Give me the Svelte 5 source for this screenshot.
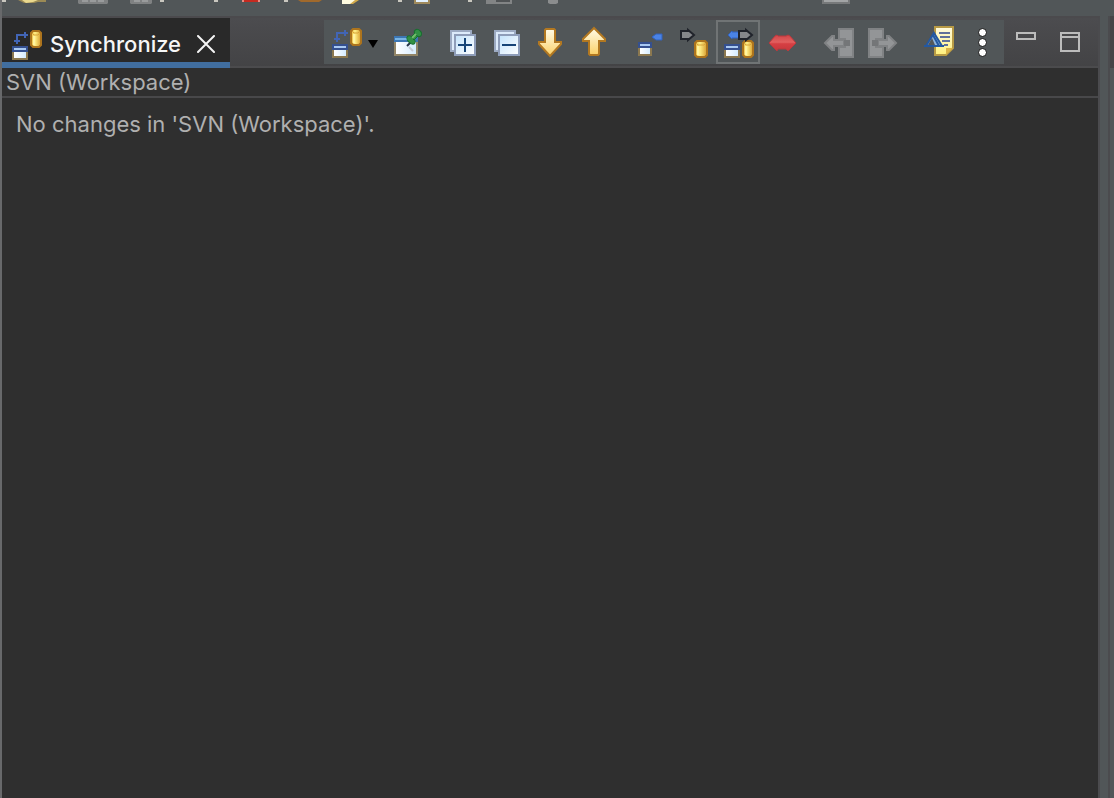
<script>
  let mode = $state('both');
  let open = $state(true);
  const participant = 'SVN (Workspace)';
</script>

{#snippet cylinder(x, y, w, h)}
  <g transform="translate({x} {y})" stroke="#ad741d" stroke-width="2">
    <path
      d="M3 1H{w - 3}L{w - 1} 3V{h - 3}L{w - 3} {h - 1}H3L1 {h - 3}V3Z"
      fill="url(#gold)"
    />
    <path d="M2 3L4 5H{w - 4}L{w - 2} 3" fill="none" stroke="#d9a43a" stroke-width="1" />
    <path d="M4 6V{h - 3}" stroke="#fff3a0" />
  </g>
{/snippet}

{#snippet pane(x, y, w, h)}
  <g transform="translate({x} {y})">
    <rect width={w} height={h} fill="#8b7850" />
    <rect width={w} height="6" fill="#35508f" />
    <rect x="2" y="2" width={w - 4} height="2" fill="#a9c9f2" />
    <rect x="2" y="6" width={w - 4} height={h - 8} fill="url(#glass)" />
  </g>
{/snippet}

{#snippet syncIcon()}
  <svg viewBox="0 0 32 32" aria-hidden="true">
    <path d="M7 14V7H16" fill="none" stroke="#4265b5" stroke-width="2" />
    <path d="M14 4H16V6H18V8H16V10H14Z" fill="#4265b5" />
    <path d="M4 12H10V14H8V16H6V14H4Z" fill="#4265b5" />
    {@render cylinder(20, 2, 12, 18)}
    {@render pane(2, 18, 16, 14)}
  </svg>
{/snippet}

{#snippet grayArrow(x, y)}
  <path
    transform="translate({x} {y})"
    d="M1 2H8V1L14 6L8 11V10H1Z"
    fill="#85878b"
    stroke="#20232b"
    stroke-width="2"
  />
{/snippet}

{#snippet pages(plus)}
  <svg viewBox="0 0 32 32" aria-hidden="true">
    <rect x="5" y="5" width="20" height="20" fill="#dceafa" stroke="#9caac2" stroke-width="2" />
    <rect x="9" y="9" width="20" height="20" fill="url(#page)" stroke="#8e9db9" stroke-width="2" />
    <path d="M12 19H26" stroke="#174477" stroke-width="2" />
    {#if plus}<path d="M19 12V26" stroke="#174477" stroke-width="2" />{/if}
  </svg>
{/snippet}

<div class="workbench">
  <div class="trim">
    <svg class="trim-icons" width="860" height="5" aria-hidden="true">
      <defs>
        <linearGradient id="gold">
          <stop offset="0" stop-color="#e8b73d" />
          <stop offset=".4" stop-color="#fff087" />
          <stop offset="1" stop-color="#d79b2c" />
        </linearGradient>
        <linearGradient id="glass" x2="1">
          <stop offset="0" stop-color="#fff" />
          <stop offset="1" stop-color="#d5ecff" />
        </linearGradient>
        <linearGradient id="page" x2="1" y2="1">
          <stop offset="0" stop-color="#c3e2fb" />
          <stop offset="1" stop-color="#fff" />
        </linearGradient>
        <linearGradient id="arrow" x2="0" y2="1">
          <stop offset="0" stop-color="#fffbe8" />
          <stop offset="1" stop-color="#fbd167" />
        </linearGradient>
        <linearGradient id="red" x2="0" y2="1">
          <stop offset="0" stop-color="#cf4548" />
          <stop offset=".45" stop-color="#e2605f" />
          <stop offset=".55" stop-color="#d63f43" />
          <stop offset="1" stop-color="#c4383d" />
        </linearGradient>
        <linearGradient id="note" x2="0" y2="1">
          <stop offset="0" stop-color="#fffbe0" />
          <stop offset="1" stop-color="#fff07b" />
        </linearGradient>
      </defs>
      <path
        d="M2 0h4v2h-4zM160 0h4v2h-4zM214 0h4v2h-4zM284 0h4v2h-4zM398 0h4v2h-4zM468 0h4v2h-4z"
        fill="#c9c7bf"
      />
      <path d="M18 0H46V2H38L34 3H24Z" fill="#9b8a55" />
      <path d="M22 0H38L33 2L26 3Z" fill="#ead98f" />
      <path d="M78 0H108V3L107 4H79L78 3ZM130 0H152V3L151 4H131L130 3Z" fill="#7f8182" />
      <path d="M82 1H104M134 1H148" stroke="#999b9c" stroke-width="2" stroke-dasharray="6 2" />
      <rect x="242" width="18" height="2" fill="#e98a80" />
      <rect x="244" width="14" height="2" fill="#c52a20" />
      <path d="M298 0H322L319 2H301Z" fill="#a0692c" />
      <path d="M342 0H359L353 4H342Z" fill="#d2a94a" />
      <path d="M342 0H355L350 4H342Z" fill="#fffbe0" />
      <rect x="414" width="16" height="4" fill="#a08a5c" />
      <rect x="416" width="12" height="2" fill="#e2f1ff" />
      <rect x="486" width="26" height="4" fill="#828485" />
      <rect x="496" width="14" height="2" fill="#505355" />
      <path d="M548 0H558V3L556 4H550L548 3Z" fill="#8b8d8e" />
      <rect x="822" width="28" height="4" fill="#77797a" />
      <rect x="824" width="24" height="2" fill="#a2a4a5" />
    </svg>
  </div>

  <div class="main">
    <section class="view">
      <header class="header">
        <div class="tab">
          {@render syncIcon()}
          <h1>Synchronize</h1>
          <button class="close" aria-label="Close" onclick={() => (open = false)}>
            <svg width="18" height="18" viewBox="0 0 18 18" aria-hidden="true">
              <path d="M1 1L17 17M17 1L1 17" stroke="#f4f4f4" stroke-width="2" stroke-linecap="round" />
            </svg>
          </button>
        </div>

        <div class="tools">
          <div class="toolbar" role="toolbar" aria-label="Synchronize">
            <div class="group">
              <button class="tool wide" aria-label="Synchronize" aria-haspopup="menu">
                {@render syncIcon()}
                <svg class="caret" viewBox="0 0 10 8" aria-hidden="true">
                  <path d="M0 0H10L5 8Z" fill="#000" />
                </svg>
              </button>
              <button class="tool" aria-label="Pin current synchronization">
                <svg viewBox="0 0 32 32" aria-hidden="true">
                  <rect x="4" y="10" width="24" height="20" fill="#928567" />
                  <rect x="4" y="10" width="24" height="6" fill="#3d77b4" />
                  <rect x="5" y="12" width="20" height="2" fill="#78b5e5" />
                  <rect x="6" y="16" width="20" height="12" fill="url(#glass)" />
                  <path d="M17 20L21 16" stroke="#27364a" stroke-width="2" />
                  <path d="M19 21L23 25" stroke="#c5c9d5" stroke-width="2" />
                  <g fill="#329044" stroke="#176e2f" stroke-width="1">
                    <ellipse cx="21" cy="14" rx="3" ry="5" transform="rotate(-45 21 14)" />
                    <path d="M21 11L26 6L29 9L24 14Z" />
                    <ellipse cx="28" cy="7" rx="3" ry="4" transform="rotate(-45 28 7)" />
                  </g>
                  <path d="M22 12L26 8" stroke="#72bd6c" stroke-width="2" />
                </svg>
              </button>
            </div>

            <div class="group">
              <button class="tool" aria-label="Expand all">{@render pages(true)}</button>
              <button class="tool" aria-label="Collapse all">{@render pages(false)}</button>
              <button class="tool" aria-label="Next difference">
                <svg viewBox="0 0 32 32" aria-hidden="true">
                  <path
                    d="M12 3H20L21 4V16H27V18L16 30L5 18V16H11V4Z"
                    fill="url(#arrow)"
                    stroke="#b27821"
                    stroke-width="2"
                  />
                </svg>
              </button>
              <button class="tool" aria-label="Previous difference">
                <svg viewBox="0 0 32 32" aria-hidden="true">
                  <path
                    d="M16 2L27 13V15H21V28L20 29H12L11 28V15H5V13Z"
                    fill="url(#arrow)"
                    stroke="#b27821"
                    stroke-width="2"
                  />
                </svg>
              </button>
            </div>

            <div class="group">
              <button
                class="tool"
                class:active={mode === 'incoming'}
                aria-label="Incoming mode"
                onclick={() => (mode = 'incoming')}
              >
                <svg viewBox="0 0 32 32" aria-hidden="true">
                  {@render pane(4, 16, 14, 14)}
                  <path d="M18 11L22 8H28V14H22Z" fill="#4a83e5" stroke="#3262bd" stroke-width="1" />
                </svg>
              </button>
              <button
                class="tool"
                class:active={mode === 'outgoing'}
                aria-label="Outgoing mode"
                onclick={() => (mode = 'outgoing')}
              >
                <svg viewBox="0 0 32 32" aria-hidden="true">
                  {@render grayArrow(2, 3)}
                  {@render cylinder(16, 14, 14, 18)}
                </svg>
              </button>
              <button
                class="tool"
                class:active={mode === 'both'}
                aria-label="Incoming/Outgoing mode"
                onclick={() => (mode = 'both')}
              >
                <svg viewBox="0 0 32 32" aria-hidden="true">
                  <path d="M6 9L10 5V6H17V12H10V13Z" fill="#4a83e5" stroke="#3262bd" stroke-width="1" />
                  {@render pane(2, 18, 16, 14)}
                  {@render cylinder(20, 14, 12, 18)}
                  {@render grayArrow(16, 3)}
                </svg>
              </button>
              <button
                class="tool"
                class:active={mode === 'conflicts'}
                aria-label="Conflicts mode"
                onclick={() => (mode = 'conflicts')}
              >
                <svg viewBox="0 0 32 32" aria-hidden="true">
                  <path
                    d="M3 17L9 10L11 9L12 10H20L22 9L24 10L30 17L24 23L22 25L20 23H12L11 25L9 23Z"
                    fill="url(#red)"
                    stroke="#b9393d"
                    stroke-width="1"
                  />
                </svg>
              </button>
            </div>

            <div class="group">
              <button class="tool" aria-label="Update all incoming changes" disabled>
                <svg viewBox="0 0 32 32" aria-hidden="true">
                  <path d="M17 3H31V31H17V21H23V13H17Z" fill="#939597" stroke="#808284" stroke-width="2" />
                  <path d="M3 17L10 10H12V14H22V20H12V24H10Z" fill="#939597" stroke="#808284" stroke-width="2" />
                  <rect x="22" y="14" width="6" height="6" fill="#747678" />
                </svg>
              </button>
              <button class="tool" aria-label="Commit all outgoing changes" disabled>
                <svg viewBox="0 0 32 32" aria-hidden="true">
                  <path d="M3 3H17V13H10V21H17V31H3Z" fill="#939597" stroke="#808284" stroke-width="2" />
                  <path d="M30 17L23 10H21V14H12V20H21V24H23Z" fill="#939597" stroke="#808284" stroke-width="2" />
                  <rect x="6" y="14" width="6" height="6" fill="#747678" />
                </svg>
              </button>
            </div>

            <div class="group">
              <button class="tool" aria-label="Show change sets">
                <svg viewBox="0 0 32 32" aria-hidden="true">
                  <path d="M13 1H31V22L24 29H13Z" fill="url(#note)" stroke="#b79a45" stroke-width="2" />
                  <path d="M24 29V22H31Z" fill="#dbb347" />
                  <path d="M17 7H28M18 11H28M20 15H28M22 19H26" stroke="#62719a" stroke-width="2" />
                  <path d="M12 7L20 20H4Z" fill="#8fb4dc" stroke="#2458a0" stroke-width="2" />
                  <path d="M10 12L6 19H13Z" fill="#52575b" />
                  <path d="M11 9L17 20" stroke="#2458a0" stroke-width="2" />
                  <path d="M2 20H22" stroke="#2458a0" stroke-width="2" />
                </svg>
              </button>
              <button class="tool" aria-label="View menu">
                <svg viewBox="0 0 32 32" aria-hidden="true">
                  <g fill="#fff" stroke="#111" stroke-width="1">
                    <circle cx="16.5" cy="6.5" r="4" />
                    <circle cx="16.5" cy="16.5" r="4" />
                    <circle cx="16.5" cy="26.5" r="4" />
                  </g>
                </svg>
              </button>
            </div>
          </div>

          <button class="tool" aria-label="Minimize">
            <svg viewBox="0 0 32 32" aria-hidden="true">
              <rect x="7" y="7" width="18" height="6" fill="none" stroke="#bcbcbc" stroke-width="2" />
            </svg>
          </button>
          <button class="tool" aria-label="Maximize">
            <svg viewBox="0 0 32 32" aria-hidden="true">
              <path d="M7 7H25V25H7ZM7 11H25" fill="none" stroke="#bcbcbc" stroke-width="2" />
            </svg>
          </button>
        </div>
      </header>

      {#if open}
        <p class="description">{participant}</p>
        <div class="content">No changes in '{participant}'.</div>
      {/if}
    </section>
    <div class="sash"></div>
    <div class="neighbor"><div class="neighbor-header"></div></div>
  </div>
</div>

<style>
  :global(body) {
    background: #515658;
  }

  .workbench {
    display: flex;
    flex-direction: column;
    min-height: 100vh;
    box-sizing: border-box;
    border-left: 2px solid #68696b;
    background: #515658;
    color: #b0b0b0;
    font: 22px/28px Inter, "Liberation Sans", sans-serif;
  }

  .trim {
    height: 16px;
    overflow: hidden;
  }

  .trim-icons {
    display: block;
    margin-left: -2px;
  }

  .main {
    display: flex;
    flex: 1;
  }

  .view {
    flex: 1;
    min-width: 0;
    border-top: 2px solid #4b4a4d;
    border-right: 2px solid #4b4b4e;
    background: #2f2f2f;
  }

  .header {
    display: flex;
    justify-content: space-between;
    height: 50px;
    box-sizing: border-box;
    background: linear-gradient(#4c4c4f, #434345);
    box-shadow: inset 0 -2px #4b4b4d;
  }

  .tab {
    display: flex;
    align-items: center;
    gap: 8px;
    padding: 8px 15px 0 8px;
    border-bottom: 6px solid #416e9f;
    background: #292929;
    color: #f6f6f6;
  }

  .tab > svg {
    width: 32px;
    height: 32px;
  }

  h1 {
    margin: 0;
    font: inherit;
    font-weight: 500;
  }

  button {
    margin: 0;
    padding: 0;
    border: 0;
    background: none;
    color: inherit;
    font: inherit;
  }

  .close {
    display: flex;
    padding-left: 8px;
  }

  .tools {
    display: flex;
    align-items: flex-start;
    padding: 2px 6px 0 0;
  }

  .toolbar {
    display: flex;
    gap: 12px;
    background: #515658;
  }

  .group {
    display: flex;
  }

  .tool {
    display: flex;
    align-items: center;
    justify-content: center;
    width: 44px;
    height: 44px;
    box-sizing: border-box;
  }

  svg {
    flex: none;
  }

  .tool svg {
    width: 32px;
    height: 32px;
  }

  .tool.wide {
    justify-content: flex-start;
    gap: 6px;
    width: 60px;
    padding-left: 6px;
  }

  .tool .caret {
    width: 10px;
    height: 8px;
    margin-top: 4px;
  }

  .tool.active {
    border: 2px solid #707475;
  }

  .description {
    margin: 0;
    padding: 0 4px;
    border-bottom: 2px solid #48484a;
  }

  .content {
    padding: 12px 14px;
  }

  .sash {
    width: 8px;
    background: #515658;
  }

  .neighbor {
    width: 4px;
    border-left: 2px solid #4b4b4e;
    background: #515658;
  }

  .neighbor-header {
    height: 52px;
    background: #464548;
  }
</style>
